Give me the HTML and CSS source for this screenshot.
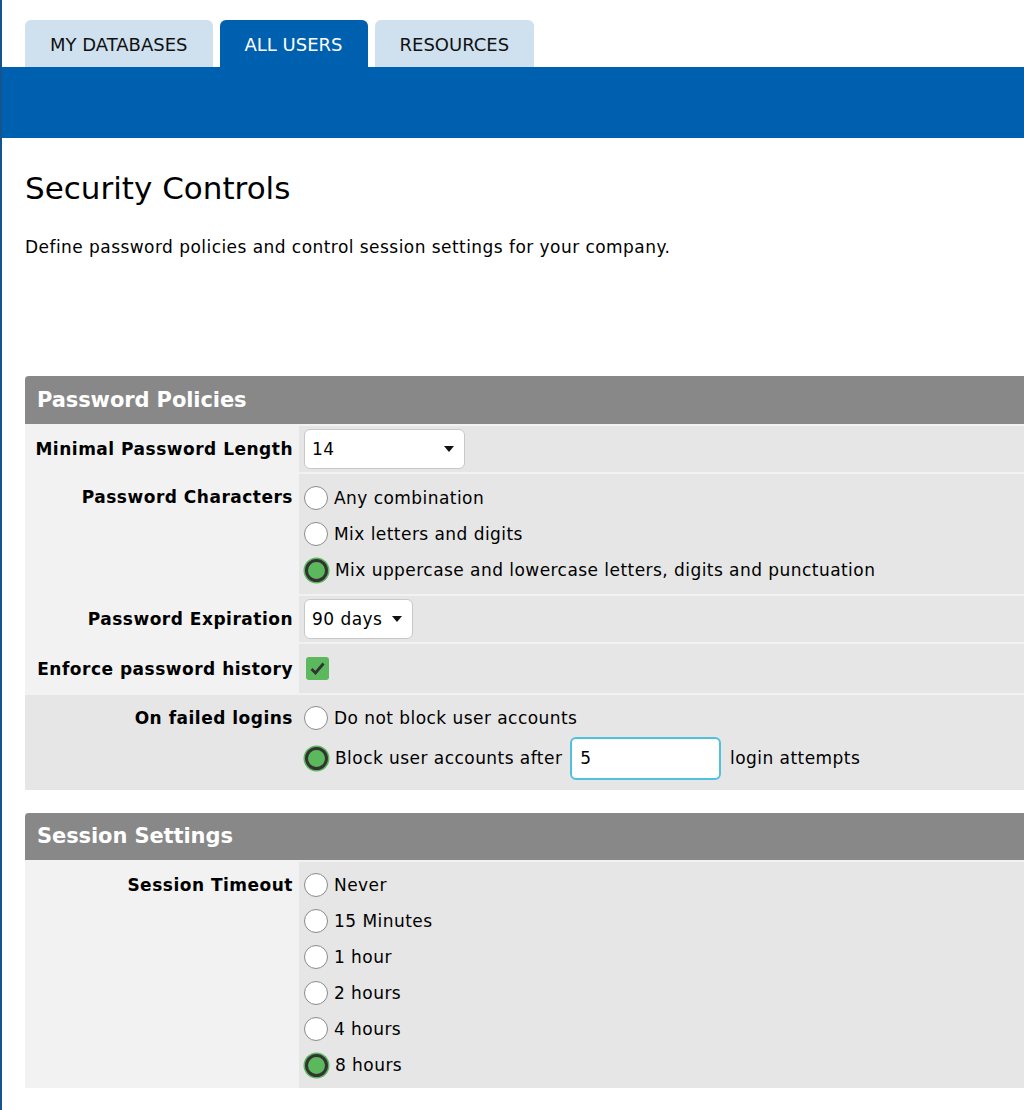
FILE: index.html
```html
<!DOCTYPE html>
<html lang="en">
<head>
  <meta charset="UTF-8">
  <title>Security Controls</title>
  <link rel="stylesheet" href="styles.css">
</head>
<body>

<!-- Tabs -->
<nav class="tabs">
  <a class="tab">MY DATABASES</a>
  <a class="tab active">ALL USERS</a>
  <a class="tab">RESOURCES</a>
</nav>
<div class="band"></div>

<main class="content">
  <h1>Security Controls</h1>
  <p class="intro">Define password policies and control session settings for your company.</p>

  <!-- Password policies -->
  <section class="panel">
    <h2 class="panel-title">Password Policies</h2>

    <div class="row">
      <div class="label">Minimal Password Length</div>
      <div class="value">
        <div class="select wide"><span>14</span><span class="caret"></span></div>
      </div>
    </div>

    <div class="row">
      <div class="label">Password Characters</div>
      <div class="value list">
        <div class="option"><span class="radio"></span>Any combination</div>
        <div class="option"><span class="radio"></span>Mix letters and digits</div>
        <div class="option"><span class="radio checked"></span>Mix uppercase and lowercase letters, digits and punctuation</div>
      </div>
    </div>

    <div class="row short">
      <div class="label">Password Expiration</div>
      <div class="value">
        <div class="select"><span>90 days</span><span class="caret"></span></div>
      </div>
    </div>

    <div class="row check-row">
      <div class="label">Enforce password history</div>
      <div class="value">
        <span class="checkbox">
          <svg width="15" height="13" viewBox="0 0 15 13"><path d="M1.5 7 L5.5 11 L13.5 1.5" fill="none" stroke="#333" stroke-width="2.8"/></svg>
        </span>
      </div>
    </div>

    <div class="row highlight">
      <div class="label">On failed logins</div>
      <div class="value list failed">
        <div class="option"><span class="radio"></span>Do not block user accounts</div>
        <div class="option tall"><span class="radio checked"></span>Block user accounts after <input class="attempts" type="text" value="5"> login attempts</div>
      </div>
    </div>
  </section>

  <!-- Session settings -->
  <section class="panel">
    <h2 class="panel-title">Session Settings</h2>

    <div class="row">
      <div class="label">Session Timeout</div>
      <div class="value list session">
        <div class="option"><span class="radio"></span>Never</div>
        <div class="option"><span class="radio"></span>15 Minutes</div>
        <div class="option"><span class="radio"></span>1 hour</div>
        <div class="option"><span class="radio"></span>2 hours</div>
        <div class="option"><span class="radio"></span>4 hours</div>
        <div class="option"><span class="radio checked"></span>8 hours</div>
      </div>
    </div>
  </section>
</main>

</body>
</html>
```

FILE: styles.css
```css
body {
  font-family: 'DejaVu Sans', Verdana, sans-serif;
  font-size: 17px;
  letter-spacing: 0.45px;
  color: #000;
  background: #fff;
  margin: 0;
  border-left: 2px solid #15558f;
  min-height: 1110px;
  box-sizing: border-box;
}

.tabs {
  display: flex;
  gap: 7px;
  padding: 20px 0 0 23px;
}

.tab {
  display: block;
  height: 47px;
  line-height: 49px;
  padding: 0 25px;
  background: #cfe0ef;
  border-radius: 6px 6px 0 0;
  font-size: 18px;
  letter-spacing: 0;
  color: #111;
}

.tab.active {
  background: #0060b0;
  color: #fff;
}

.band {
  height: 71px;
  background: #0060b0;
}

.content {
  padding-left: 23px;
}

h1 {
  font-weight: normal;
  font-size: 31px;
  letter-spacing: 0;
  margin: 30px 0 0;
  line-height: 40px;
}

.intro {
  margin: 28px 0 0;
  line-height: 22px;
}

.panel {
  margin-top: 118px;
  background: #f2f2f2;
  display: flex;
  flex-direction: column;
  gap: 2px;
}

.panel + .panel {
  margin-top: 23px;
}

.panel-title {
  margin: 0;
  height: 48px;
  line-height: 48px;
  padding-left: 12px;
  background: #888;
  color: #fff;
  font-size: 21px;
  font-weight: bold;
  border-radius: 4px 0 0 0;
  letter-spacing: -0.1px;
}

.panel + .panel .panel-title {
  height: 47px;
  line-height: 47px;
}

.row {
  display: flex;
  min-height: 46px;
}

.row.short {
  min-height: 45px;
}

.label {
  width: 268px;
  flex: none;
  padding-right: 5px;
  text-align: right;
  font-weight: bold;
  letter-spacing: 0.5px;
  padding-top: 12px;
  line-height: 22px;
  white-space: nowrap;
}

.value {
  flex: 1;
  margin-left: 1px;
  background: #e6e6e6;
  padding: 3px 5px;
  display: flex;
  align-items: center;
}

.check-row {
  min-height: 49px;
}

.check-row .label {
  padding-top: 14px;
}

.row.highlight {
  background: #e6e6e6;
}

.list {
  flex-direction: column;
  align-items: flex-start;
  padding: 6px 5px;
}

.list.failed {
  padding: 5px 5px 10px;
}

.list.session {
  padding: 5px 5px;
}

.option {
  display: flex;
  align-items: center;
  height: 36px;
  white-space: pre;
}

.option.tall {
  height: 44px;
}

.radio {
  width: 22px;
  height: 22px;
  border: 1px solid #8a8a8a;
  border-radius: 50%;
  background: #fff;
  margin-right: 6px;
  flex: none;
}

.radio.checked {
  width: 17px;
  height: 17px;
  margin: 0 7px 0 1px;
  background: #5cb85c;
  border: 3px solid #333;
  box-shadow: 0 0 0 1.5px #5cb85c;
}

.select {
  display: flex;
  align-items: center;
  justify-content: space-between;
  height: 38px;
  padding: 0 10px 0 7px;
  background: #fff;
  border: 1px solid #c8c8c8;
  border-radius: 6px;
  gap: 10px;
}

.select.wide {
  width: 142px;
}

.caret {
  width: 0;
  height: 0;
  border-left: 5px solid transparent;
  border-right: 5px solid transparent;
  border-top: 6px solid #111;
}

.checkbox {
  width: 23px;
  height: 23px;
  margin-left: 2px;
  background: #5cb85c;
  border-radius: 3px;
  display: flex;
  align-items: center;
  justify-content: center;
}

.attempts {
  width: 131px;
  height: 39px;
  margin: 0 3px 0 2px;
  padding: 0 8px;
  border: 2px solid #4fc1dd;
  border-radius: 6px;
  font-family: inherit;
  font-size: 17px;
  box-sizing: content-box;
  outline: none;
}
```
